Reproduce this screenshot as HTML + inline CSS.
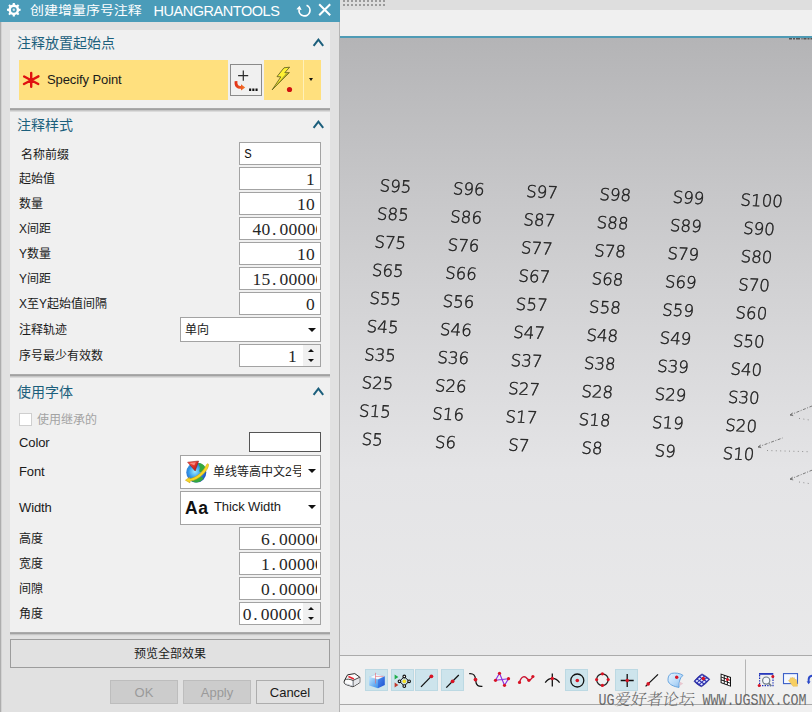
<!DOCTYPE html>
<html lang="zh">
<head>
<meta charset="utf-8">
<title>创建增量序号注释</title>
<style>
*{box-sizing:border-box;margin:0;padding:0}
html,body{width:812px;height:712px;overflow:hidden;background:#f0f0f0}
body{position:relative;font-family:"Liberation Sans","Noto Sans CJK SC",sans-serif;font-size:12px;color:#1a1a1a}
.abs{position:absolute}
/* ---------- right side (graphics window) ---------- */
#topstrip{left:340px;top:0;width:472px;height:10px;background:#dedede}
#topdots{left:343px;top:0;width:43px;height:7px;
  background-image:linear-gradient(to right,#9a9a9a 50%,transparent 50%),linear-gradient(to right,#9a9a9a 50%,transparent 50%);
  background-size:4px 2px,4px 2px;background-repeat:repeat-x,repeat-x;
  background-position:0 0,0 4px;}
#topwhite{left:340px;top:10px;width:472px;height:26px;background:#f0f0f0}
#tealline{left:340px;top:36px;width:472px;height:2px;background:#4f9bb5}
#view{left:340px;top:38px;width:472px;height:617px;
  background:linear-gradient(to bottom,#b4b4b6 0%,#c7c7c9 25%,#d8d8da 50%,#e4e4e6 70%,#e9e9ea 100%);overflow:hidden}
#tbar{left:340px;top:655px;width:472px;height:57px;background:#f0f0f0;border-top:1px solid #ababab}
#tbarline{left:340px;top:704px;width:472px;height:1px;background:#a8a8a8}
.hl{position:absolute;top:669px;width:23px;height:22px;background:#cde4ec;border:1px solid #bcd9e3}
#wm{left:598.5px;top:690.5px;width:215px;height:22px;color:#686868;white-space:nowrap;line-height:22px;font-size:0}
#wm .m{display:inline-block;font-family:"Liberation Mono",monospace;font-size:13.33px;line-height:22px;transform:scaleY(1.24);transform-origin:0 70%;vertical-align:top}
#wm .c{display:inline-block;font-family:"Noto Serif CJK SC","Noto Sans CJK SC",serif;font-weight:300;font-size:16px;line-height:22px;transform:skewX(-7deg);vertical-align:top;position:relative;top:-2.5px}
/* ---------- dialog ---------- */
#dlg{left:0;top:0;width:340px;height:712px;background:#e1e1e1}
#ledge{left:0;top:22px;width:2px;height:690px;background:linear-gradient(to right,#adadad 50%,#d2d2d2 50%)}
#redge{left:339px;top:22px;width:1px;height:690px;background:#b4b4b4}
#title{left:0;top:0;width:340px;height:22px;background:#4a9cb9;color:#fff;font-size:14.3px;line-height:22px;white-space:nowrap}
.sec{position:absolute;left:10px;width:320px;background:#f0f0f0}
.sec:after{content:"";position:absolute;left:0;right:0;top:100%;height:4px;background:linear-gradient(to bottom,#aaaaaa 0,#aaaaaa 25%,#a2a2a2 25%,#a2a2a2 50%,#c6c6c6 50%,#c6c6c6 75%,#dbdbdb 75%,#dbdbdb 100%)}
.hd{position:absolute;left:17px;font-size:14px;line-height:18px;color:#1c5f7c;white-space:nowrap}
.lb{position:absolute;left:19px;font-size:12px;line-height:16px;white-space:nowrap;color:#1a1a1a}
.en{font-size:13px;letter-spacing:-0.1px}
.in{position:absolute;left:239px;width:82px;height:23px;background:#fff;border:1px solid #a3a3a3;overflow:hidden}
.in b{position:absolute;top:0;font-weight:normal;font-family:"Liberation Serif",serif;font-size:17.5px;line-height:22px;letter-spacing:0.25px;color:#262626;white-space:nowrap}
.in b i{display:inline-block;width:9px;font-style:normal;text-align:left;padding-left:1.5px;letter-spacing:0}
.clip{position:absolute;left:0;top:0;height:21px;overflow:hidden}
.dd{position:absolute;left:180px;width:141px;background:#fff;border:1px solid #a3a3a3}
.arr{position:absolute;width:0;height:0;border-left:4px solid transparent;border-right:4px solid transparent;border-top:4px solid #111}
.spn{position:absolute;right:0;top:0;width:17px;height:21px;background:#f0f0f0}
.spn:before{content:"";position:absolute;left:5px;top:4px;border-left:3.5px solid transparent;border-right:3.5px solid transparent;border-bottom:3.5px solid #111}
.spn:after{content:"";position:absolute;left:5px;top:14px;border-left:3.5px solid transparent;border-right:3.5px solid transparent;border-top:3.5px solid #111}
.btn{position:absolute;top:680px;width:68px;height:24px;font-size:13px;line-height:23.5px;text-align:center;border:1px solid #adadad;background:#e1e1e1;color:#1a1a1a}
.btn.dis{background:#cccccc;border-color:#bdbdbd;color:#9a9a9a}
.chev{position:absolute;left:312px;width:13px;height:10px}
</style>
</head>
<body>
<!-- ================= RIGHT SIDE ================= -->
<div class="abs" id="topstrip"></div>
<div class="abs" id="topdots"></div>
<div class="abs" id="topwhite"></div>
<div class="abs" id="tealline"></div>
<div class="abs" id="view">
<svg id="lbls" width="472" height="617" viewBox="340 38 472 617" style="position:absolute;left:0;top:0;will-change:transform">
<g font-family="'DejaVu Sans Light','DejaVu Sans','Liberation Sans',sans-serif" font-weight="200" font-size="16.6" fill="#1e1e1e" stroke="#1e1e1e" stroke-width="0.45" text-anchor="middle" id="grid">
<text transform="matrix(0.9992 0.0393 -0.0910 0.9959 372.40 439.20)" y="6.0">S5</text>
<text transform="matrix(0.9992 0.0393 -0.0910 0.9959 445.64 442.08)" y="6.0">S6</text>
<text transform="matrix(0.9992 0.0393 -0.0910 0.9959 518.88 444.96)" y="6.0">S7</text>
<text transform="matrix(0.9992 0.0393 -0.0910 0.9959 592.12 447.84)" y="6.0">S8</text>
<text transform="matrix(0.9992 0.0393 -0.0910 0.9959 665.36 450.72)" y="6.0">S9</text>
<text transform="matrix(0.9992 0.0393 -0.0910 0.9959 738.60 453.60)" y="6.0">S10</text>
<text transform="matrix(0.9992 0.0393 -0.0910 0.9959 374.97 411.06)" y="6.0">S15</text>
<text transform="matrix(0.9992 0.0393 -0.0910 0.9959 448.21 413.94)" y="6.0">S16</text>
<text transform="matrix(0.9992 0.0393 -0.0910 0.9959 521.45 416.82)" y="6.0">S17</text>
<text transform="matrix(0.9992 0.0393 -0.0910 0.9959 594.69 419.70)" y="6.0">S18</text>
<text transform="matrix(0.9992 0.0393 -0.0910 0.9959 667.93 422.58)" y="6.0">S19</text>
<text transform="matrix(0.9992 0.0393 -0.0910 0.9959 741.17 425.46)" y="6.0">S20</text>
<text transform="matrix(0.9992 0.0393 -0.0910 0.9959 377.54 382.92)" y="6.0">S25</text>
<text transform="matrix(0.9992 0.0393 -0.0910 0.9959 450.78 385.80)" y="6.0">S26</text>
<text transform="matrix(0.9992 0.0393 -0.0910 0.9959 524.02 388.68)" y="6.0">S27</text>
<text transform="matrix(0.9992 0.0393 -0.0910 0.9959 597.26 391.56)" y="6.0">S28</text>
<text transform="matrix(0.9992 0.0393 -0.0910 0.9959 670.50 394.44)" y="6.0">S29</text>
<text transform="matrix(0.9992 0.0393 -0.0910 0.9959 743.74 397.32)" y="6.0">S30</text>
<text transform="matrix(0.9992 0.0393 -0.0910 0.9959 380.11 354.78)" y="6.0">S35</text>
<text transform="matrix(0.9992 0.0393 -0.0910 0.9959 453.35 357.66)" y="6.0">S36</text>
<text transform="matrix(0.9992 0.0393 -0.0910 0.9959 526.59 360.54)" y="6.0">S37</text>
<text transform="matrix(0.9992 0.0393 -0.0910 0.9959 599.83 363.42)" y="6.0">S38</text>
<text transform="matrix(0.9992 0.0393 -0.0910 0.9959 673.07 366.30)" y="6.0">S39</text>
<text transform="matrix(0.9992 0.0393 -0.0910 0.9959 746.31 369.18)" y="6.0">S40</text>
<text transform="matrix(0.9992 0.0393 -0.0910 0.9959 382.68 326.64)" y="6.0">S45</text>
<text transform="matrix(0.9992 0.0393 -0.0910 0.9959 455.92 329.52)" y="6.0">S46</text>
<text transform="matrix(0.9992 0.0393 -0.0910 0.9959 529.16 332.40)" y="6.0">S47</text>
<text transform="matrix(0.9992 0.0393 -0.0910 0.9959 602.40 335.28)" y="6.0">S48</text>
<text transform="matrix(0.9992 0.0393 -0.0910 0.9959 675.64 338.16)" y="6.0">S49</text>
<text transform="matrix(0.9992 0.0393 -0.0910 0.9959 748.88 341.04)" y="6.0">S50</text>
<text transform="matrix(0.9992 0.0393 -0.0910 0.9959 385.25 298.50)" y="6.0">S55</text>
<text transform="matrix(0.9992 0.0393 -0.0910 0.9959 458.49 301.38)" y="6.0">S56</text>
<text transform="matrix(0.9992 0.0393 -0.0910 0.9959 531.73 304.26)" y="6.0">S57</text>
<text transform="matrix(0.9992 0.0393 -0.0910 0.9959 604.97 307.14)" y="6.0">S58</text>
<text transform="matrix(0.9992 0.0393 -0.0910 0.9959 678.21 310.02)" y="6.0">S59</text>
<text transform="matrix(0.9992 0.0393 -0.0910 0.9959 751.45 312.90)" y="6.0">S60</text>
<text transform="matrix(0.9992 0.0393 -0.0910 0.9959 387.82 270.36)" y="6.0">S65</text>
<text transform="matrix(0.9992 0.0393 -0.0910 0.9959 461.06 273.24)" y="6.0">S66</text>
<text transform="matrix(0.9992 0.0393 -0.0910 0.9959 534.30 276.12)" y="6.0">S67</text>
<text transform="matrix(0.9992 0.0393 -0.0910 0.9959 607.54 279.00)" y="6.0">S68</text>
<text transform="matrix(0.9992 0.0393 -0.0910 0.9959 680.78 281.88)" y="6.0">S69</text>
<text transform="matrix(0.9992 0.0393 -0.0910 0.9959 754.02 284.76)" y="6.0">S70</text>
<text transform="matrix(0.9992 0.0393 -0.0910 0.9959 390.39 242.22)" y="6.0">S75</text>
<text transform="matrix(0.9992 0.0393 -0.0910 0.9959 463.63 245.10)" y="6.0">S76</text>
<text transform="matrix(0.9992 0.0393 -0.0910 0.9959 536.87 247.98)" y="6.0">S77</text>
<text transform="matrix(0.9992 0.0393 -0.0910 0.9959 610.11 250.86)" y="6.0">S78</text>
<text transform="matrix(0.9992 0.0393 -0.0910 0.9959 683.35 253.74)" y="6.0">S79</text>
<text transform="matrix(0.9992 0.0393 -0.0910 0.9959 756.59 256.62)" y="6.0">S80</text>
<text transform="matrix(0.9992 0.0393 -0.0910 0.9959 392.96 214.08)" y="6.0">S85</text>
<text transform="matrix(0.9992 0.0393 -0.0910 0.9959 466.20 216.96)" y="6.0">S86</text>
<text transform="matrix(0.9992 0.0393 -0.0910 0.9959 539.44 219.84)" y="6.0">S87</text>
<text transform="matrix(0.9992 0.0393 -0.0910 0.9959 612.68 222.72)" y="6.0">S88</text>
<text transform="matrix(0.9992 0.0393 -0.0910 0.9959 685.92 225.60)" y="6.0">S89</text>
<text transform="matrix(0.9992 0.0393 -0.0910 0.9959 759.16 228.48)" y="6.0">S90</text>
<text transform="matrix(0.9992 0.0393 -0.0910 0.9959 395.53 185.94)" y="6.0">S95</text>
<text transform="matrix(0.9992 0.0393 -0.0910 0.9959 468.77 188.82)" y="6.0">S96</text>
<text transform="matrix(0.9992 0.0393 -0.0910 0.9959 542.01 191.70)" y="6.0">S97</text>
<text transform="matrix(0.9992 0.0393 -0.0910 0.9959 615.25 194.58)" y="6.0">S98</text>
<text transform="matrix(0.9992 0.0393 -0.0910 0.9959 688.49 197.46)" y="6.0">S99</text>
<text transform="matrix(0.9992 0.0393 -0.0910 0.9959 761.73 200.34)" y="6.0">S100</text>
</g>
<g stroke="#6e6e6e" stroke-width="0.9" fill="none" stroke-dasharray="3 1.5 1 1.5" id="dash">
<path d="M790.0 415.0 L812.0 406.0" /><path d="M790.0 415.0 l2.6 -2.1 M790.0 415.0 l3.2 0.7" stroke-dasharray="none"/>
<path d="M758.0 447.0 L782.5 438.0" /><path d="M758.0 447.0 l2.6 -2.1 M758.0 447.0 l3.2 0.7" stroke-dasharray="none"/>
<path d="M790.0 479.2 L812.0 470.2" /><path d="M790.0 479.2 l2.6 -2.1 M790.0 479.2 l3.2 0.7" stroke-dasharray="none"/>
<path d="M799 418.4 L812 420.4 M767 450.5 L808 451.7 M799 482 L812 484" stroke-dasharray="1 3.4" stroke="#888"/>
</g>
<path d="M789 38.6 H812" stroke="#555" stroke-width="1.6" stroke-dasharray="3 1 2 1 4 1.5 1 1"/>
</svg>
</div>
<div class="abs" id="tbar"></div>
<div class="abs" id="tbarline"></div>
<div class="hl" style="left:365px"></div>
<div class="hl" style="left:391px"></div>
<div class="hl" style="left:415px"></div>
<div class="hl" style="left:441px"></div>
<div class="hl" style="left:565px"></div>
<div class="hl" style="left:615px"></div>
<svg class="abs" id="icons" style="left:340px;top:655px" width="472" height="57" viewBox="340 655 472 57">
<defs>
<linearGradient id="gcl" x1="0" y1="0" x2="1" y2="1"><stop offset="0" stop-color="#bfe6ff"/><stop offset="1" stop-color="#3b8eea"/></linearGradient>
<linearGradient id="gcr" x1="0" y1="0" x2="1" y2="1"><stop offset="0" stop-color="#4d8ff0"/><stop offset="1" stop-color="#1d4fd0"/></linearGradient>
<linearGradient id="gsf" x1="0" y1="0" x2="1" y2="1"><stop offset="0" stop-color="#eaf5ff"/><stop offset="0.6" stop-color="#b5d8f8"/><stop offset="1" stop-color="#7fb4ea"/></linearGradient>
<radialGradient id="ggl" cx="0.4" cy="0.35" r="0.7"><stop offset="0" stop-color="#8fd0ff"/><stop offset="0.6" stop-color="#2f7fe0"/><stop offset="1" stop-color="#1546a8"/></radialGradient>
</defs>
<path d="M347.6 674.8 L354.8 673.6 L359.8 677.2 L359.8 682.6 L353 686.8 L345.6 684.4 C343.7 683.4 343.8 681.4 344.8 679.8 Z" fill="#fbfbfb" stroke="#2a2a2a" stroke-width="1"/>
<path d="M353 680.4 L359.6 677.4 L359.6 682.5 L353 686.5 Z" fill="#e4e6ea"/>
<path d="M344.9 679.9 C347 678.6 350 679.2 353 680.4 L359.7 677.3 M353 680.4 L353 686.6" fill="none" stroke="#333" stroke-width="0.9"/>
<path d="M345.6 683.8 L352.6 686 L352.6 681" fill="none" stroke="#c4c9d2" stroke-width="1"/>
<path d="M348.4 676.6 L353.9 678.9" stroke="#e8222e" stroke-width="1.6" fill="none"/>
<path d="M369.2 677.2 L376.2 674 L384.8 676.3 L378 679.6 Z" fill="#f4fbff" stroke="#9fc6e6" stroke-width="0.5"/>
<path d="M369.2 677.2 L378 679.6 L378 688.2 L369.2 685.6 Z" fill="url(#gcl)"/>
<path d="M378 679.6 L384.8 676.3 L384.8 685 L378 688.2 Z" fill="url(#gcr)"/>
<path d="M375.5 672.8 V683.5 M375.5 676.4 L383.5 676.4" stroke="#e8606c" stroke-width="0.6" fill="none"/>
<path d="M394.6 674.6 L398.4 677 L394.6 679.4 Z" fill="#1fae4b"/>
<path d="M394.6 682.6 L398.4 685 L394.6 687.4 Z" fill="#c0392b"/>
<path d="M404.3 676.6 L409.1 681.3 L404.3 686 L399.5 681.3 Z" fill="none" stroke="#111" stroke-width="1"/>
<circle cx="404.3" cy="681.3" r="1.6" fill="#ffe820" stroke="#d8c000" stroke-width="0.4"/>
<circle cx="404.3" cy="676.5" r="1.35" fill="#fff" stroke="#111" stroke-width="1.1"/>
<circle cx="404.3" cy="686.1" r="1.35" fill="#fff" stroke="#111" stroke-width="1.1"/>
<circle cx="399.5" cy="681.3" r="1.35" fill="#fff" stroke="#111" stroke-width="1.1"/>
<circle cx="409.1" cy="681.3" r="1.35" fill="#fff" stroke="#111" stroke-width="1.1"/>
<path d="M421 686.9 L431.2 676.4" stroke="#111" stroke-width="1.3" fill="none"/><circle cx="431.4" cy="676.3" r="1.9" fill="#d81324"/>
<path d="M446.3 687.6 L458.8 675" stroke="#111" stroke-width="1.3" fill="none"/><circle cx="452.6" cy="681.3" r="1.9" fill="#d81324"/>
<path d="M469.2 673.7 C475.5 673.2 475.3 677.5 475.6 680 C476 685.8 478.5 686.6 482.4 686.3" stroke="#111" stroke-width="1.3" fill="none"/><circle cx="475.5" cy="679.6" r="1.9" fill="#d81324"/>
<path d="M495.5 680.3 L499.5 673.3 L504.5 685.3 L508.5 678.7 M495.5 680.3 L508.5 678.7" stroke="#8a2be2" stroke-width="1.1" fill="none"/>
<circle cx="495.5" cy="680.3" r="1.6" fill="#d81324"/>
<circle cx="499.5" cy="673.3" r="1.6" fill="#d81324"/>
<circle cx="504.5" cy="685.3" r="1.6" fill="#d81324"/>
<circle cx="508.5" cy="678.7" r="1.6" fill="#d81324"/>
<path d="M519.5 682.5 C521.5 675.5 525 676 527 678.5 C529 681 531 680.5 533 676.5" stroke="#c8102e" stroke-width="1.4" fill="none"/>
<circle cx="519.5" cy="682.4" r="1.6" fill="#d81324"/>
<circle cx="528.9" cy="680.3" r="1.6" fill="#d81324"/>
<circle cx="532.9" cy="676.5" r="1.6" fill="#d81324"/>
<path d="M552.3 673.5 V686.6 M545.2 682.6 C547.5 679.5 550 678.4 552.3 678.4 C554.6 678.4 557.3 679.5 559.6 682.6" stroke="#111" stroke-width="1.3" fill="none"/><circle cx="552.3" cy="678.5" r="1.7" fill="#d81324"/>
<circle cx="577.3" cy="680.5" r="6.5" fill="none" stroke="#111" stroke-width="1.3"/><circle cx="577.3" cy="680.5" r="1.8" fill="#d81324"/>
<circle cx="602.4" cy="679.6" r="5.8" fill="none" stroke="#222" stroke-width="1.2"/>
<circle cx="602.4" cy="673.8" r="1.6" fill="#d81324"/>
<circle cx="602.4" cy="685.4" r="1.6" fill="#d81324"/>
<circle cx="596.6" cy="679.6" r="1.6" fill="#d81324"/>
<circle cx="608.2" cy="679.6" r="1.6" fill="#d81324"/>
<path d="M627.2 674 V687 M620.7 680.5 H633.7" stroke="#111" stroke-width="1.3" fill="none"/><circle cx="627.2" cy="680.5" r="1.7" fill="#d81324"/>
<path d="M645.6 686.4 L658 674.4" stroke="#111" stroke-width="1.3" fill="none"/><circle cx="648.2" cy="683.9" r="1.8" fill="#d81324"/>
<path d="M671.5 673.4 C675.5 672.6 680 673.2 683 675.4 C680 677.5 678.8 681.5 679 687.4 C674 686.6 668.5 684.5 668 680.5 C667.8 677 669 674.5 671.5 673.4 Z" fill="url(#gsf)" stroke="#5c9edc" stroke-width="0.9"/>
<path d="M679.6 681.5 L683.2 683.5 L679.6 686 Z" fill="#e8c8d0"/>
<circle cx="676.7" cy="677.3" r="1.7" fill="#d81324"/>
<path d="M694 681.2 C697 677.5 699.5 675.5 702 673.9 C705 675.5 707.5 677 709.8 679.3 C707 682.5 704.5 685 701.4 686.7 C698.5 685.5 696 683.5 694 681.2 Z" fill="#2a2fb0" stroke="#20208a" stroke-width="0.6"/>
<path d="M695.41 681.10 L697.04 679.65 L698.56 680.71 L696.91 682.18 Z" fill="#e4e8ff"/>
<path d="M697.88 678.90 L699.51 677.44 L701.06 678.50 L699.41 679.96 Z" fill="#e4e8ff"/>
<path d="M700.35 676.70 L701.99 675.24 L703.57 676.28 L701.91 677.74 Z" fill="#e4e8ff"/>
<path d="M697.68 682.73 L699.34 681.26 L700.86 682.33 L699.18 683.81 Z" fill="#e4e8ff"/>
<path d="M700.20 680.51 L701.86 679.04 L703.41 680.09 L701.73 681.57 Z" fill="#e4e8ff"/>
<path d="M702.72 678.28 L704.38 676.81 L705.96 677.85 L704.28 679.33 Z" fill="#e4e8ff"/>
<path d="M699.95 684.36 L701.65 682.88 L703.17 683.94 L701.46 685.44 Z" fill="#e4e8ff"/>
<path d="M702.52 682.11 L704.21 680.63 L705.76 681.68 L704.05 683.17 Z" fill="#e4e8ff"/>
<path d="M705.08 679.87 L706.77 678.38 L708.35 679.42 L706.64 680.91 Z" fill="#e4e8ff"/>
<circle cx="703.3" cy="678.6" r="1.8" fill="#d81324"/>
<path d="M720.6 673.4 L731 677 L731 686.8 L720.6 683 Z" fill="#111"/>
<path d="M721.57 674.79 L723.76 675.56 L723.76 677.53 L721.57 676.75 Z" fill="#fff"/>
<path d="M724.70 675.89 L726.90 676.66 L726.90 678.65 L724.70 677.87 Z" fill="#fff"/>
<path d="M727.84 676.99 L730.03 677.76 L730.03 679.77 L727.84 678.99 Z" fill="#fff"/>
<path d="M721.57 677.59 L723.76 678.38 L723.76 680.35 L721.57 679.55 Z" fill="#fff"/>
<path d="M724.70 678.71 L726.90 679.50 L726.90 681.49 L724.70 680.69 Z" fill="#fff"/>
<path d="M727.84 679.84 L730.03 680.63 L730.03 682.63 L727.84 681.83 Z" fill="#fff"/>
<path d="M721.57 680.39 L723.76 681.20 L723.76 683.17 L721.57 682.35 Z" fill="#fff"/>
<path d="M724.70 681.54 L726.90 682.34 L726.90 684.33 L724.70 683.52 Z" fill="#fff"/>
<path d="M727.84 682.69 L730.03 683.49 L730.03 685.50 L727.84 684.68 Z" fill="#fff"/>
<circle cx="727.5" cy="679.4" r="1.5" fill="#d81324"/>
<path d="M745.5 659.5 V697" stroke="#b5b5b5" stroke-width="1" fill="none"/>
<path d="M759 673.9 H773.3" stroke="#1c2fb8" stroke-width="1.7" fill="none"/>
<path d="M759.6 675 V685.6 H773 V675" stroke="#1c2fb8" stroke-width="1.2" stroke-dasharray="1.4 1.2" fill="none"/>
<circle cx="766.2" cy="680.6" r="3.6" fill="#f4f8fc" stroke="#6f7c88" stroke-width="1.2"/><path d="M768.8 683.4 L771.3 686" stroke="#6f7c88" stroke-width="1.7" fill="none"/>
<circle cx="772.8" cy="676.4" r="1.5" fill="#d81324"/><circle cx="759.2" cy="685.6" r="1.5" fill="#d81324"/>
<rect x="783.5" y="673.6" width="14" height="10" fill="#f4f8ff" stroke="#3a5fc8" stroke-width="1.1"/>
<path d="M788.5 680.5 L790.2 679.3 L790.4 677.6 L791.6 678.8 L792 677 L793.2 678.6 L794 677.4 L795 679.5 L796.2 679.4 L797.2 683.6 L797.5 686.2 L793 686.3 L790.5 683 Z" fill="#f7cf62" stroke="#e0b040" stroke-width="0.4"/>
<path d="M812 674.8 C808.5 675 807.3 678 807.8 681.5 L806.6 681.3 L808.6 684.3 L810.6 681.6 L809.6 681.5 C809.4 679 810 677 812 676.8 Z" fill="#2a48c8"/>
</svg>
<div class="abs" id="wm"><span class="m">UG</span><span class="c">爱好者论坛</span><span class="m">&nbsp;WWW.UGSNX.COM</span></div>

<!-- ================= DIALOG ================= -->
<div class="abs" id="dlg"></div>
<div class="abs" id="ledge"></div>
<div class="abs" id="redge"></div>
<div class="abs" id="title"><span class="abs" style="left:29.5px;top:0;font-size:13.2px;transform:scale(1.06,0.93);transform-origin:0 50%">创建增量序号注释</span><span class="abs" style="left:153.6px;top:0;font-size:14.5px;letter-spacing:-0.47px">HUANGRANTOOLS</span></div>
<svg class="abs" style="left:0;top:0" width="340" height="22" viewBox="0 0 340 22">
<path d="M12.66 4.52 L12.77 2.98 L14.83 2.98 L14.94 4.52 L16.73 5.26 L17.90 4.25 L19.35 5.70 L18.34 6.87 L19.08 8.66 L20.62 8.77 L20.62 10.83 L19.08 10.94 L18.34 12.73 L19.35 13.90 L17.90 15.35 L16.73 14.34 L14.94 15.08 L14.83 16.62 L12.77 16.62 L12.66 15.08 L10.87 14.34 L9.70 15.35 L8.25 13.90 L9.26 12.73 L8.52 10.94 L6.98 10.83 L6.98 8.77 L8.52 8.66 L9.26 6.87 L8.25 5.70 L9.70 4.25 L10.87 5.26Z M10.90 9.80 a2.9 2.9 0 1 0 5.8 0 a2.9 2.9 0 1 0 -5.8 0Z" fill="#fff" fill-rule="evenodd"/><circle cx="13.8" cy="9.8" r="1.2" fill="#fff" opacity="0.75"/>
<path d="M306.56 5.30 A5.5 5.5 0 1 1 299.05 9.63" fill="none" stroke="#fff" stroke-width="1.7"/><path d="M296.38 9.26 L301.73 10.01 L299.58 5.87 Z" fill="#fff"/>
<path d="M319.2 4.2 L330.2 15.2 M330.2 4.2 L319.2 15.2" stroke="#fff" stroke-width="2" fill="none"/>
</svg>

<!-- section 1 -->
<div class="sec" style="top:30px;height:78px"></div>
<div class="hd" style="top:34px">注释放置起始点</div>
<svg class="chev" style="top:37px" viewBox="0 0 13 10"><path d="M1.6 8.8 L6.4 2.6 L11.2 8.8" fill="none" stroke="#1c5f7c" stroke-width="2"/></svg>
<div class="abs" style="left:19px;top:60px;width:209px;height:40px;background:#ffe07e"></div>
<div class="abs" style="left:264px;top:60px;width:57px;height:40px;background:#ffe07e"></div>
<div class="abs" style="left:303px;top:60px;width:1px;height:40px;background:#fff0b8"></div>
<div class="abs" style="left:230px;top:64px;width:32px;height:32px;background:#f0f0f0;border:1px solid #8a8a8a"></div>
<div class="lb en" style="left:47px;top:71.5px">Specify Point</div>
<div class="arr" style="left:309.2px;top:77.8px;border-left-width:2.8px;border-right-width:2.8px;border-top-width:3px"></div>
<svg class="abs" style="left:19px;top:60px" width="302" height="40" viewBox="19 60 302 40">
<path d="M31.20 80.20 L31.20 73.00 M31.20 80.20 L31.20 86.80 M31.20 80.20 L38.44 76.35 M31.20 80.20 L38.26 83.96 M31.20 80.20 L23.96 84.05 M31.20 80.20 L24.14 76.44" stroke="#e01010" stroke-width="2.4" stroke-linecap="round" fill="none"/>
<path d="M243.3 70.6 V80.8 M238.1 75.7 H248.2" stroke="#2a2a2a" stroke-width="1.2" fill="none"/>
<defs><linearGradient id="gar" x1="0" y1="0" x2="1" y2="0"><stop offset="0" stop-color="#e02a14"/><stop offset="1" stop-color="#f47a2c"/></linearGradient></defs>
<path d="M234.6 81.2 C234.2 86.6 236.4 88.8 241 88.8 L241 90.5 L245.2 87.5 L241 84.3 L241 86 C238.4 86 237.2 84.8 237.4 81 Z" fill="url(#gar)"/>
<path d="M249.1 88.4 h2.1 v2.5 h-2.1z M252.3 88.4 h2.1 v2.5 h-2.1z M255.5 88.4 h2.1 v2.5 h-2.1z" fill="#111"/>
<path d="M284 67.8 L289.6 67.2 L284.8 72.7 L289.4 72.6 L272.2 89.8 L280.8 76.9 L277 76.6 Z" fill="#fff234" stroke="#55551c" stroke-width="0.8" stroke-linejoin="round"/>
<path d="M289.4 72.6 L272.2 89.8 L286 73.4 Z" fill="#8c8c20" opacity="0.7"/>
<circle cx="289.5" cy="89.5" r="2.6" fill="#d01010"/>
</svg>

<!-- section 2 -->
<div class="sec" style="top:112px;height:262px"></div>
<div class="hd" style="top:116px">注释样式</div>
<svg class="chev" style="top:119px" viewBox="0 0 13 10"><path d="M1.6 8.8 L6.4 2.6 L11.2 8.8" fill="none" stroke="#1c5f7c" stroke-width="2"/></svg>
<div class="lb" style="left:21px;top:147px">名称前缀</div>
<div class="lb" style="top:171px">起始值</div>
<div class="lb" style="top:196px">数量</div>
<div class="lb" style="top:221px">X间距</div>
<div class="lb" style="top:246px">Y数量</div>
<div class="lb" style="top:271px">Y间距</div>
<div class="lb" style="top:296px">X至Y起始值间隔</div>
<div class="lb" style="top:322px">注释轨迹</div>
<div class="lb" style="top:348px">序号最少有效数</div>

<div class="in" style="top:142px"><span class="abs" style="left:4.3px;top:2px;font-family:'Liberation Mono',monospace;font-size:12.6px;line-height:21px;color:#111">S</span></div>
<div class="in" style="top:167px"><b style="right:5px">1</b></div>
<div class="in" style="top:192px"><b style="right:5px">10</b></div>
<div class="in" style="top:217px"><div class="clip" style="width:77.3px"><b style="left:12.5px">40<i>.</i>00000</b></div></div>
<div class="in" style="top:242px"><b style="right:5px">10</b></div>
<div class="in" style="top:267px"><div class="clip" style="width:77.3px"><b style="left:12.5px">15<i>.</i>00000</b></div></div>
<div class="in" style="top:292px"><b style="right:5px">0</b></div>
<div class="dd" style="top:317px;height:25px"><span class="abs" style="left:4px;top:4px;font-size:12px;line-height:16px">单向</span></div>
<div class="arr" style="left:308px;top:328px"></div>
<div class="in" style="top:344px"><b style="right:23px">1</b><div class="spn"></div></div>

<!-- section 3 -->
<div class="sec" style="top:378px;height:254px"></div>
<div class="hd" style="top:383px">使用字体</div>
<svg class="chev" style="top:386px" viewBox="0 0 13 10"><path d="M1.6 8.8 L6.4 2.6 L11.2 8.8" fill="none" stroke="#1c5f7c" stroke-width="2"/></svg>
<div class="abs" style="left:19px;top:413px;width:13px;height:13px;background:#fff;border:1px solid #cfcfcf"></div>
<div class="lb" style="left:37px;top:412px;color:#a3a3a3">使用继承的</div>
<div class="lb en" style="top:435px">Color</div>
<div class="abs" style="left:249px;top:432px;width:72px;height:20px;background:#fff;border:1px solid #555"></div>
<div class="lb en" style="top:464px">Font</div>
<div class="dd" style="top:455px;height:34px"><div class="abs" style="left:32px;top:8px;width:87.6px;height:18px;overflow:hidden;white-space:nowrap;font-size:12px;line-height:16px">单线等高中文2号</div></div>
<div class="arr" style="left:308px;top:469px"></div>
<div class="lb en" style="top:500px">Width</div>
<div class="dd" style="top:491px;height:34px"><span class="abs" style="left:4px;top:5px;font-weight:bold;font-size:17.5px;line-height:22px;letter-spacing:0.6px;color:#111">Aa</span><span class="abs en" style="left:33px;top:7px;line-height:16px;white-space:nowrap">Thick Width</span></div>
<div class="arr" style="left:308px;top:505px"></div>
<svg class="abs" style="left:184px;top:459px" width="27" height="26" viewBox="184 459 27 26">
<defs><radialGradient id="ggl2" cx="0.42" cy="0.45" r="0.62"><stop offset="0" stop-color="#9fecff"/><stop offset="0.45" stop-color="#3aa0ee"/><stop offset="1" stop-color="#1648b4"/></radialGradient><linearGradient id="grd" x1="0" y1="0" x2="1" y2="1"><stop offset="0" stop-color="#ff5a4a"/><stop offset="1" stop-color="#b80c0c"/></linearGradient></defs>
<circle cx="196.3" cy="472.6" r="10" fill="url(#ggl2)"/>
<path d="M198.6 463 C202 463.2 205 465.6 206 468.6 C204.5 471 202 472.5 199.6 472 C198.6 470 200.6 468.5 199.6 466.5 C198.8 465.3 198.2 464.2 198.6 463 Z" fill="#35a83f"/>
<path d="M190.5 479.5 C192.5 476.8 196 477.6 198.5 476.6 C200.6 476.2 202.6 476.8 203.4 478.6 C201.6 481.2 198.6 482.6 195.6 482.5 C193.6 482.2 191.6 481.2 190.5 479.5 Z" fill="#35a83f"/>
<path d="M187 470 C187.6 467.5 189 465.8 190.6 465 C190.6 467.5 189.6 469.8 188 471.6 Z" fill="#2f8fd8" opacity="0.6"/>
<path d="M185.4 480.2 L189.6 477.2 L189.7 478.8 C196.5 477.6 203.5 471.6 206.6 464.6 C207 463.6 208.3 463.3 208.6 464.6 C208.8 470 199 480.6 189.9 481.2 L190 482.9 Z" fill="#f7d826" stroke="#c49a10" stroke-width="0.5"/>
<path d="M187.6 462.2 L198.6 461 L195.2 471 Z" fill="url(#grd)" stroke="#8c1010" stroke-width="0.5" stroke-linejoin="round"/>
<path d="M189.3 463 L195.8 462.3 L194.3 465.6 Z" fill="#ff9a90" opacity="0.8"/>
</svg>
<div class="lb" style="top:531px">高度</div>
<div class="lb" style="top:556px">宽度</div>
<div class="lb" style="top:581px">间隙</div>
<div class="lb" style="top:606px">角度</div>
<div class="in" style="top:527px"><div class="clip" style="width:77.3px"><b style="left:21px">6<i>.</i>00000</b></div></div>
<div class="in" style="top:552px"><div class="clip" style="width:77.3px"><b style="left:21px">1<i>.</i>00000</b></div></div>
<div class="in" style="top:577px"><div class="clip" style="width:77.3px"><b style="left:21px">0<i>.</i>00000</b></div></div>
<div class="in" style="top:602px"><div class="clip" style="width:60.7px"><b style="left:2.8px">0<i>.</i>00000</b></div><div class="spn"></div></div>

<!-- bottom buttons -->
<div class="abs" style="left:10px;top:639px;width:320px;height:29px;border:1px solid #9c9c9c;background:#e1e1e1;text-align:center;font-size:12px;line-height:28px">预览全部效果</div>
<div class="btn dis" style="left:110px">OK</div>
<div class="btn dis" style="left:183px">Apply</div>
<div class="btn" style="left:256px">Cancel</div>
</body>
</html>
